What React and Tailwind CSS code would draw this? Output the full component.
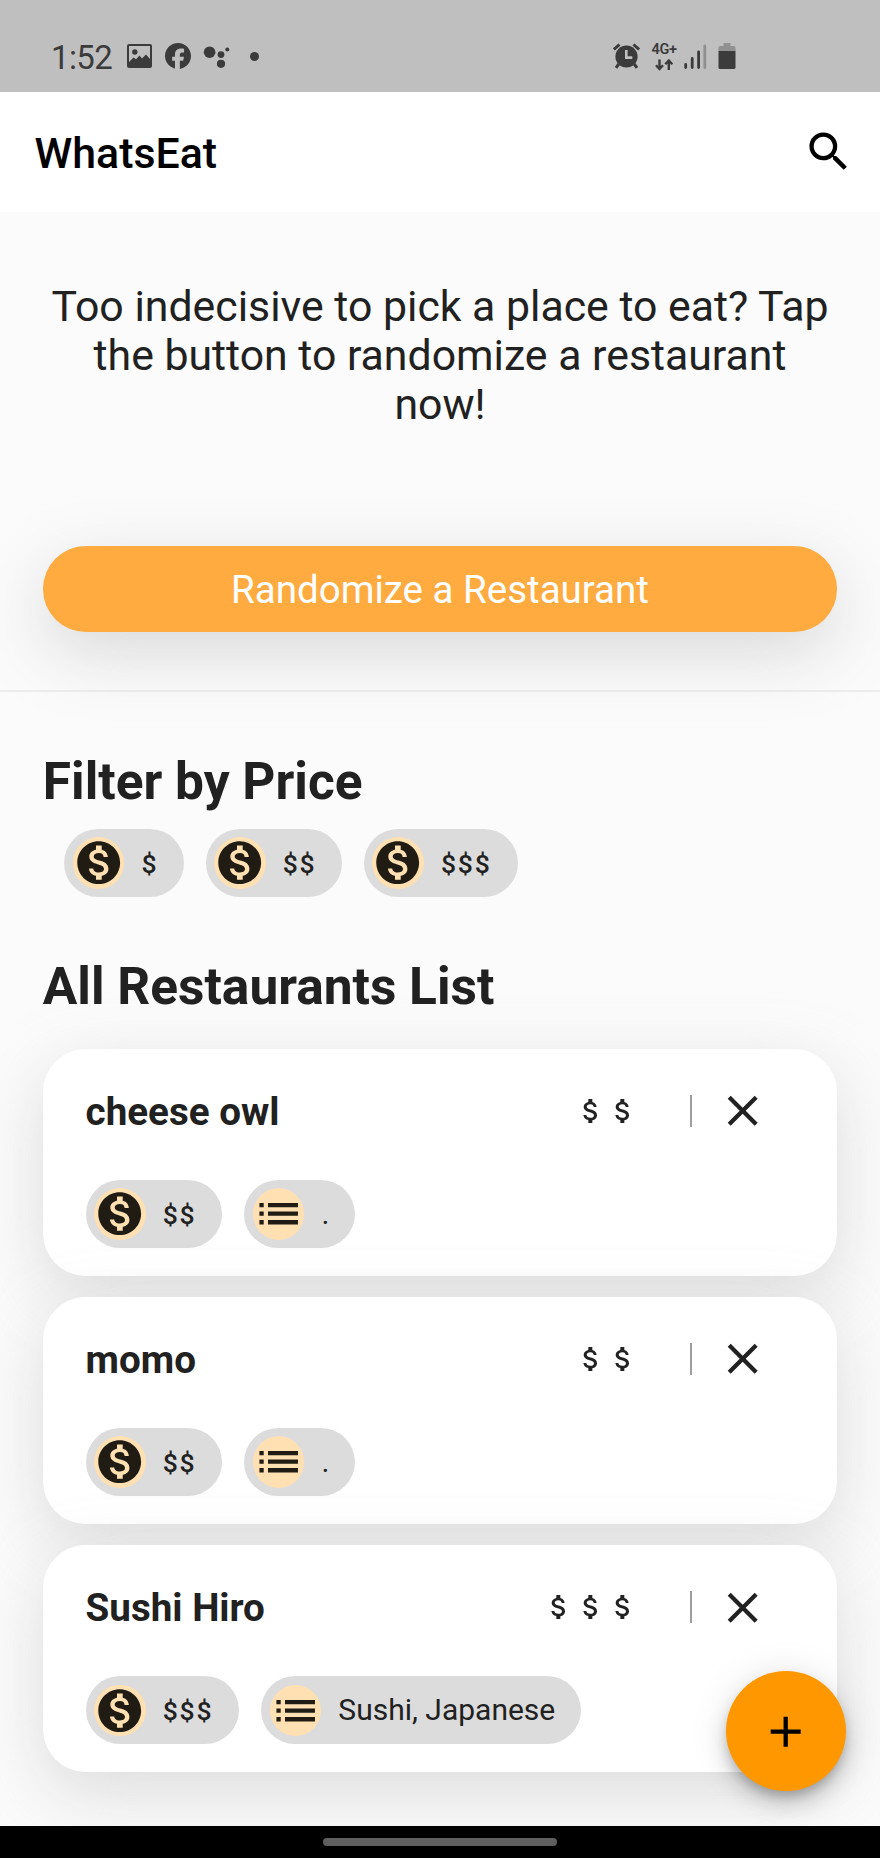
import React from "react";
import { MdSearch, MdMonetizationOn, MdList, MdAttachMoney, MdClear, MdAdd } from "react-icons/md";

function StatusBar() {
  return (
    <div className="flex h-[92px] items-start bg-[#bfbfbf] pt-[37px] text-[#3b3b3b]">
      <div className="ml-[51px] w-[73px] pt-[1px] text-[33px] leading-[40px] tracking-[-0.6px]">1:52</div>
      <svg className="mt-[5px] ml-[3px] h-[28px] w-[25px]" viewBox="0 0 25 28">
        <path
          fillRule="evenodd"
          fill="currentColor"
          d="M2 2h21a2 2 0 0 1 2 2v20a2 2 0 0 1-2 2H2a2 2 0 0 1-2-2V4a2 2 0 0 1 2-2zM2 4v16l4.500-4.500 2.500 1.800 3.500-3.800 2.500 3 4-4 4 4.500V4z"
        />
        <circle cx="7.800" cy="10" r="2.700" fill="currentColor" />
      </svg>
      <svg className="mt-[6px] ml-[13px] h-[26px] w-[26px]" viewBox="0 0 24 24">
        <path
          fill="currentColor"
          d="M24 12.07C24 5.44 18.63.07 12 .07S0 5.44 0 12.07c0 5.5 3.9 10.3 9.2 11.6V16.3H6.6v-3.6h2.6V11c0-4.1 1.9-6 5.9-6 .8 0 2 .1 2.5.3v3.4c-.3 0-.7 0-1.3 0-1.9 0-2.6.7-2.6 2.6v1.400h3.800l-.7 3.600h-3.100v7.600C19.600 23.100 24 18 24 12.070z"
        />
      </svg>
      <svg className="mt-[7px] ml-[12px] h-[26px] w-[28px]" viewBox="0 0 28 26" fill="currentColor">
        <circle cx="6.600" cy="8.200" r="5.800" />
        <circle cx="18" cy="10.600" r="3.400" />
        <circle cx="24.300" cy="5.600" r="2" />
        <circle cx="18" cy="19.800" r="4.100" />
      </svg>
      <div className="mt-[15px] ml-[19px] size-[9px] rounded-full bg-[#3b3b3b]" />
      <svg className="mt-[6px] ml-[353.500px] h-[26px] w-[27px]" viewBox="0 0 27 26" fill="none" stroke="currentColor">
        <circle cx="13.500" cy="13.500" r="11.100" fill="currentColor" stroke="none" />
        <path d="M.900 6.500 6.500 1.500M26.100 6.500 20.500 1.500M5.800 21 3 24.800M21.200 21l2.800 3.800" strokeWidth="3" />
        <path d="M13.300 7v7.600h6" stroke="#bfbfbf" strokeWidth="2.600" />
      </svg>
      <div className="ml-[11.500px] flex w-[26px] flex-col items-center pt-[6px]">
        <div className="text-[14.500px] leading-[14px] font-semibold tracking-[-0.400px] whitespace-nowrap">4G+</div>
        <svg className="mt-[2px] h-[12px] w-[20px]" viewBox="0 0 20 12" fill="none" stroke="currentColor" strokeWidth="2.400">
          <path d="M5.500 .500v9.500M2 6.200l3.500 3.800 3.500-3.800M14.800 11V2M11.300 5.300l3.500-3.800 3.500 3.800" />
        </svg>
      </div>
      <svg className="mt-[7px] ml-[7px] h-[26px] w-[23px]" viewBox="0 0 23 26" fill="none" stroke="currentColor" strokeWidth="2.800" strokeLinecap="round">
        <path d="M1.700 20.500v3M8.200 14.500v9M14.600 8v15.500" />
        <path d="M20.800 2v21.500" stroke="#8f8f8f" />
      </svg>
      <svg className="mt-[6px] ml-[11px] h-[26px] w-[18px]" viewBox="0 0 18 26">
        <path fill="#919191" d="M5.500 0h7v3H16a1.500 1.500 0 0 1 1.500 1.500V8H.500V4.500A1.500 1.500 0 0 1 2 3h3.500z" />
        <path fill="currentColor" d="M.500 8h17v16.500a1.500 1.500 0 0 1-1.500 1.500H2a1.500 1.500 0 0 1-1.500-1.500z" />
      </svg>
    </div>
  );
}

function Chip({ icon: Icon, children }) {
  return (
    <div className="flex h-[68px] shrink-0 items-center rounded-full bg-[#dcdcdc] pr-[26px] pl-[8.600px]">
      <div className="flex size-[51.400px] items-center justify-center rounded-full bg-[#ffe0b2]">
        <Icon className="size-[51.400px] text-[#211c13]" />
      </div>
      <div className="ml-[17.100px] text-[30px] leading-[36px] whitespace-nowrap">{children}</div>
    </div>
  );
}

function PriceChip({ level }) {
  return (
    <Chip icon={MdMonetizationOn}>
      <span className="text-[26.500px] font-medium tracking-[1.800px]">{"$".repeat(level)}</span>
    </Chip>
  );
}

function RestaurantCard({ name, price, category }) {
  return (
    <article className="flex h-[227px] flex-col rounded-[42.800px] bg-white pt-[36px] pl-[42.800px] shadow-[0_21px_66px_rgba(211,211,211,0.78)]">
      <div className="flex h-[52px] items-center">
        <h3 className="flex-1 pt-[2px] text-[38.570px] leading-[46px] font-bold">{name}</h3>
        <div className="flex">
          {Array.from({ length: price }, (_, i) => (
            <MdAttachMoney key={i} className="size-[32px]" />
          ))}
        </div>
        <div className="ml-[50.500px] h-[32px] w-[2px] bg-[#9e9e9e]" />
        <MdClear className="mr-[68.800px] ml-[25.200px] size-[51.400px]" />
      </div>
      <div className="mt-[43px] flex gap-[22px]">
        <PriceChip level={price} />
        <Chip icon={MdList}>{category}</Chip>
      </div>
    </article>
  );
}

const restaurants = [
  { name: "cheese owl", price: 2, category: "." },
  { name: "momo", price: 2, category: "." },
  { name: "Sushi Hiro", price: 3, category: "Sushi, Japanese" },
];

export default function App() {
  return (
    <div className="relative flex h-[1858px] w-[880px] flex-col overflow-hidden bg-[#fbfbfb] font-['Roboto',sans-serif] text-[#212121]">
      <StatusBar />
      <header className="flex h-[120px] items-center justify-between bg-white pr-[26px] pl-[34.500px] text-black">
        <h1 className="pt-[1px] text-[42.860px] leading-[50px] font-medium">WhatsEat</h1>
        <MdSearch className="size-[51.400px]" />
      </header>

      <main className="flex h-[1613.500px] flex-col overflow-hidden">
        <section className="flex h-[480px] flex-col border-b-2 border-[#ededed] px-[42.800px] pt-[69.500px]">
          <p className="text-center text-[42.800px] leading-[49.300px]">
            Too indecisive to pick a place to eat? Tap
            <br />
            the button to randomize a restaurant
            <br />
            now!
          </p>
          <button className="mt-[116.500px] h-[85.700px] rounded-[42.800px] bg-[#ffab40] pt-[2px] text-[38.500px] leading-[46px] text-white shadow-[0_21px_66px_rgba(211,211,211,0.84)]">
            Randomize a Restaurant
          </button>
        </section>

        <section className="flex flex-col pt-[59.500px]">
          <h2 className="pl-[42.800px] text-[51.430px] leading-[60px] font-bold">Filter by Price</h2>
          <div className="mt-[17.500px] flex gap-[21.400px] pl-[64.300px]">
            <PriceChip level={1} />
            <PriceChip level={2} />
            <PriceChip level={3} />
          </div>
        </section>

        <section className="flex flex-col px-[42.800px] pt-[60px]">
          <h2 className="text-[51.430px] leading-[60px] font-bold">All Restaurants List</h2>
          <div className="mt-[32px] flex flex-col gap-[21.200px]">
            {restaurants.map((r) => (
              <RestaurantCard key={r.name} {...r} />
            ))}
          </div>
        </section>
      </main>

      <footer className="flex h-[32.500px] shrink-0 justify-center bg-black pt-[12.500px]">
        <div className="h-[8px] w-[234px] rounded-full bg-[#5f5f5f]" />
      </footer>

      <button
        aria-label="Add restaurant"
        className="absolute top-[1671.400px] left-[726px] flex size-[120px] items-center justify-center rounded-full bg-[#ff9800] text-black shadow-[0_7px_11px_-2px_rgba(0,0,0,0.2),0_13px_22px_rgba(0,0,0,0.14),0_2px_39px_rgba(0,0,0,0.1)]"
      >
        <MdAdd className="size-[51.400px]" />
      </button>
    </div>
  );
}
